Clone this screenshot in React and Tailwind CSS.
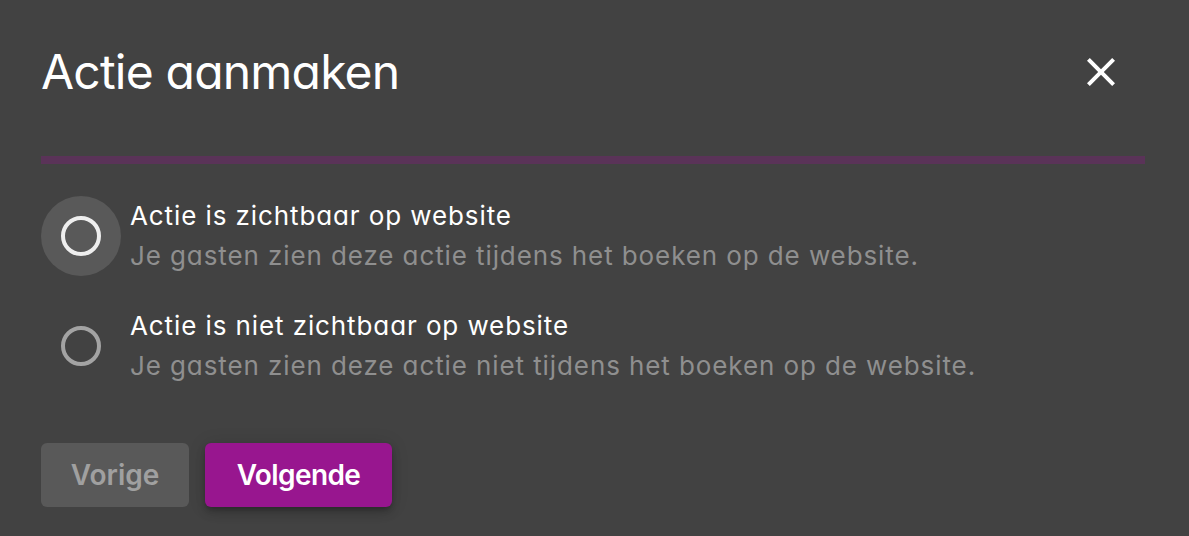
import React from "react";

const OPTIONS = [
    {
        title: "Actie is zichtbaar op website",
        text: "Je gasten zien deze actie tijdens het boeken op de website.",
        active: true,
    },
    {
        title: "Actie is niet zichtbaar op website",
        text: "Je gasten zien deze actie niet tijdens het boeken op de website.",
        active: false,
    },
];

const RadioRing = ({ active }) => (
    <div className={`w-20 h-20 shrink-0 rounded-full flex items-center justify-center ${active ? "bg-[#595959]" : ""}`}>
        <div className={`w-10 h-10 rounded-full border-4 ${active ? "border-[#eeeeee]" : "border-[#a3a3a3]"}`} />
    </div>
);

export default function App() {
    return (
        <div className="w-full h-[536px] bg-[#424242] pl-[41px] pr-[44px] font-['Inter',sans-serif] [font-feature-settings:'cv11'] overflow-hidden">
            <div className="pt-[43px] flex justify-between items-center">
                <h1 className="text-[48px] leading-[58px] font-normal text-white tracking-[-0.8px]">Actie aanmaken</h1>
                <svg viewBox="0 0 24 24" className="w-12 h-12 mr-5 fill-white">
                    <path d="M19 6.41 17.59 5 12 10.59 6.41 5 5 6.41 10.59 12 5 17.59 6.41 19 12 13.41 17.59 19 19 17.59 13.41 12z" />
                </svg>
            </div>

            <div className="mt-[55px] h-2 bg-[#5a3358]" />

            <div className="mt-8 flex flex-col gap-[30px]">
                {OPTIONS.map((opt) => (
                    <div key={opt.title} className="flex items-center">
                        <RadioRing active={opt.active} />
                        <div className="ml-[9px] text-[26px] leading-[40px] tracking-[0.9px]">
                            <div className="text-white">{opt.title}</div>
                            <div className="text-[#8f8f8f]">{opt.text}</div>
                        </div>
                    </div>
                ))}
            </div>

            <div className="mt-[57px] flex gap-4">
                <button className="w-[148px] h-16 rounded-md bg-[#595959] text-[#a0a0a0] text-[28px] font-semibold">
                    Vorige
                </button>
                <button className="w-[187px] h-16 rounded-md bg-[#98168f] text-white text-[28px] font-semibold tracking-[-0.6px] shadow-[0_3px_5px_-1px_rgba(0,0,0,0.2),0_6px_10px_0_rgba(0,0,0,0.14),0_1px_18px_0_rgba(0,0,0,0.12)]">
                    Volgende
                </button>
            </div>
        </div>
    );
}
